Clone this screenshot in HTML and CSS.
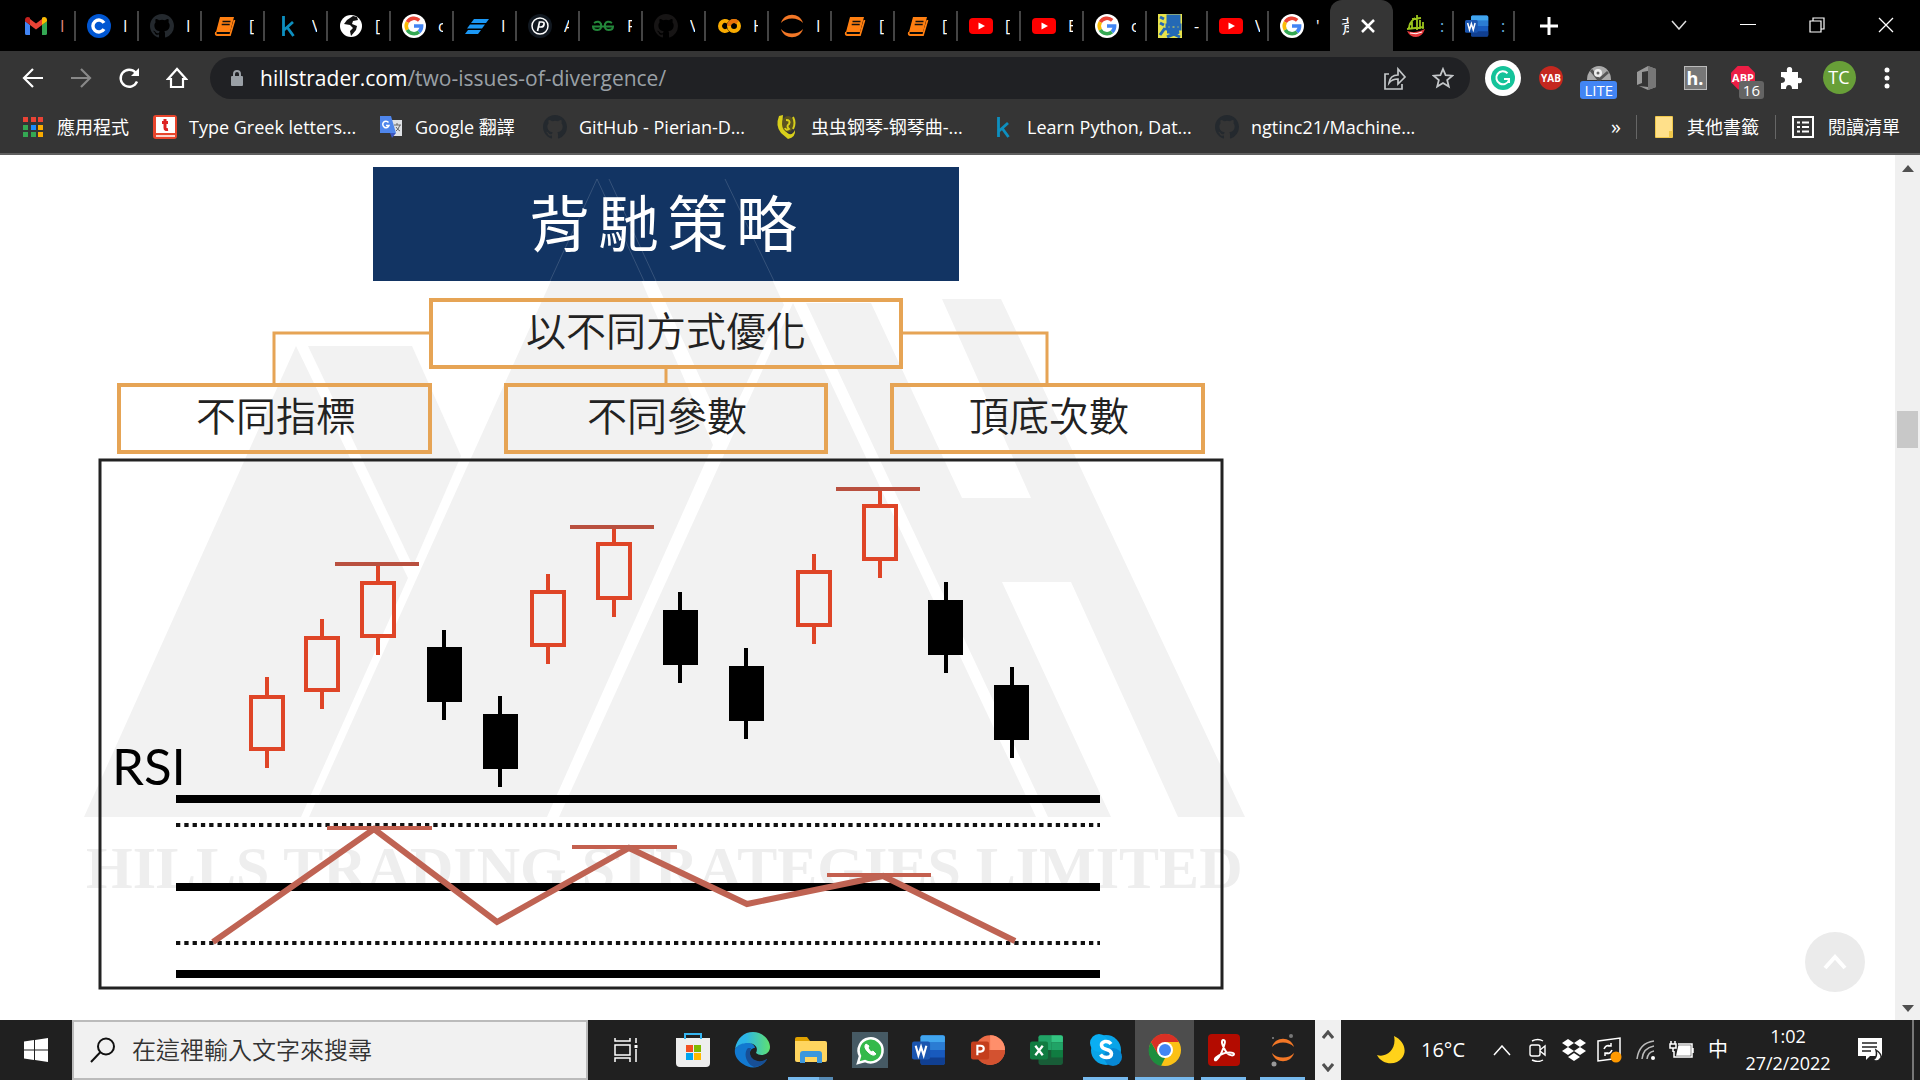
FILE: index.html
```html
<!DOCTYPE html>
<html lang="zh-Hant">
<head>
<meta charset="utf-8">
<meta name="viewport" content="width=device-width, initial-scale=1">
<title>背馳策略</title>
<link rel="stylesheet" href="styles.css">
</head>
<body>
<svg class="defs" aria-hidden="true">
  <symbol id="gmail" viewBox="0 0 24 24"><path fill="#4285f4" d="M1 5.500V19.500Q1 21 2.500 21H6V11L1 7z"/><path fill="#34a853" d="M18 21h3.500q1.500 0 1.500-1.500V7l-5 4z"/><path fill="#ea4335" d="M6 5l6 4.500L18 5v6l-6 4.500L6 11z"/><path fill="#c5221f" d="M1 6c0-3 3-4 5-2.200V11L1 7.300z"/><path fill="#fbbc04" d="M23 6c0-3-3-4-5-2.200V11l5-3.700z"/></symbol>
  <symbol id="coursera" viewBox="0 0 24 24"><circle cx="12" cy="12" r="12" fill="#0056d2"/><path d="M17 8.800a6 6 0 1 0 0 6.400" fill="none" stroke="#fff" stroke-width="3.400"/></symbol>
  <symbol id="github" viewBox="0 0 16 16"><path fill="currentColor" d="M8 0C3.580 0 0 3.580 0 8c0 3.540 2.290 6.530 5.470 7.590.4.070.55-.17.55-.38 0-.19-.01-.82-.01-1.490-2.010.37-2.530-.49-2.690-.94-.09-.23-.48-.94-.82-1.130-.28-.15-.68-.52-.01-.53.630-.01 1.080.58 1.230.82.720 1.210 1.870.87 2.330.66.070-.52.280-.87.510-1.070-1.780-.2-3.640-.89-3.640-3.950 0-.87.310-1.590.82-2.150-.08-.2-.36-1.020.08-2.120 0 0 .67-.21 2.200.82a7.600 7.600 0 0 1 4 0c1.530-1.040 2.200-.82 2.200-.82.440 1.100.16 1.920.08 2.120.51.560.82 1.270.82 2.150 0 3.070-1.870 3.750-3.650 3.950.29.250.54.730.54 1.480 0 1.070-.01 1.930-.01 2.200 0 .21.15.46.55.38A8 8 0 0 0 16 8c0-4.420-3.580-8-8-8z"/></symbol>
  <symbol id="book" viewBox="0 0 24 24"><path fill="#ff7f11" d="M7 3h14l-4 15H3z"/><path d="M3 18q-1 3 1.500 3H17l4.500-15" fill="none" stroke="#ff7f11" stroke-width="1.800"/><path d="M9.500 7.500h8M8.700 10.500h8" stroke="#111" stroke-width="1.500"/><path d="M4 19h13" stroke="#111"/></symbol>
  <symbol id="kaggle" viewBox="0 0 24 24"><path d="M7.500 2v20M17 8l-9 8M11 13l6.500 9" fill="none" stroke="#0d8fbf" stroke-width="2.800"/></symbol>
  <symbol id="globe" viewBox="0 0 24 24"><circle cx="12" cy="12" r="11" fill="#fff"/><path d="M14 2L8 6l-3 4 6 1 3 3-3 3 1 5 5-6 1-4-5-2 1-3 5-1-1-3z" fill="#111"/></symbol>
  <symbol id="google" viewBox="0 0 24 24"><circle cx="12" cy="12" r="12" fill="#fff"/><g fill="none" stroke-width="3.600"><path stroke="#ea4335" d="M5.300 8.200A7.700 7.700 0 0 1 17.200 6.300"/><path stroke="#fbbc04" d="M5.300 8.200a7.700 7.700 0 0 0 0 7.600"/><path stroke="#34a853" d="M5.300 15.800a7.700 7.700 0 0 0 11.700 2"/><path stroke="#4285f4" d="M12 12h7.600a7.500 7.500 0 0 1-2.600 5.800"/></g></symbol>
  <symbol id="stripes" viewBox="0 0 24 24"><path fill="#1b98f5" d="M9 5h15l-3 4H6zM5 10.500h15l-3 4H2zM3 16h13l-3 4H0z"/></symbol>
  <symbol id="pierian" viewBox="0 0 24 24"><circle cx="12" cy="12" r="12" fill="#111820"/><circle cx="12" cy="12" r="8" fill="none" stroke="#fff" stroke-width="1.500"/><path d="M9.500 17l2-9h2.500q2.500 0 2 2.500-.5 2.500-3 2.500h-2" fill="none" stroke="#fff" stroke-width="1.700"/></symbol>
  <symbol id="gfg" viewBox="0 0 24 24"><path d="M3 9q5-3 7 1 1 6-3.500 6T2 12.500h20Q22 16 17.500 16T14 10q2-4 7-1" fill="none" stroke="#23873a" stroke-width="2"/></symbol>
  <symbol id="colab" viewBox="0 0 24 24"><path d="M11 8a5 5 0 1 0 0 8" fill="none" stroke="#f9ab00" stroke-width="4"/><circle cx="17" cy="12" r="5" fill="none" stroke="#f9ab00" stroke-width="4"/><path d="M12 12a5 5 0 0 1 8.500-3.500" fill="none" stroke="#e8710a" stroke-width="4"/></symbol>
  <symbol id="jupyter" viewBox="0 0 24 24"><path fill="#f37726" d="M1 9C4-2 20-2 23 9 18 3 6 3 1 9zM1 15c3 11 19 11 22 0-5 6-17 6-22 0z"/></symbol>
  <symbol id="youtube" viewBox="0 0 24 24"><rect y="4" width="24" height="16" rx="4" fill="red"/><path d="M9.500 8.500v7l6.500-3.500z" fill="#fff"/></symbol>
  <symbol id="manga" viewBox="0 0 24 24"><path fill="#e8e34a" d="M0 0h24v24H0z"/><path d="M2 3l4 2M2 9l4 2M2 21l5-7M10 2h11v6H10zM10 5h11M9 11h13v4H9zM13 11v4M18 11v4M9 18h12L9 23M11 18l11 5" fill="none" stroke="#2469b5" stroke-width="3"/></symbol>
  <symbol id="boat" viewBox="0 0 24 24"><path d="M13 1v15M11 4Q5 9 5 14M8 8v7M16 6v9M19 8v7M3 15l17-2M8 5l9-1" fill="none" stroke="#9bc31c" stroke-width="1.800"/><path d="M3 17q9 3 18-2-3 8-9 8t-9-6z" fill="#e83b3e"/><path d="M6 19q6 2 12-1" stroke="#fff" fill="none"/></symbol>
  <symbol id="word" viewBox="0 0 32 32"><rect x="8" y="2" width="23" height="28" rx="2" fill="#185abd"/><path fill="#41a5ee" d="M8 9V4q0-2 2-2h19q2 0 2 2v5z"/><path fill="#2b7cd3" d="M8 9h23v7H8z"/><path fill="#103f91" d="M8 23h23v5q0 2-2 2H10q-2 0-2-2z"/><rect y="8" width="17" height="17" rx="2" fill="#1a55b0"/><path d="M3.500 12l2.500 9 2.500-8 2.500 8 2.500-9" fill="none" stroke="#fff" stroke-width="2"/></symbol>
  <symbol id="ppt" viewBox="0 0 32 32"><circle cx="18" cy="16" r="14" fill="#ed6c47"/><path fill="#ff8f6b" d="M18 2a14 14 0 0 1 14 14H18z"/><path fill="#d35230" d="M4 16h28a14 14 0 0 1-28 0z"/><rect y="8" width="17" height="17" rx="2" fill="#c43e1c"/><path d="M6 21v-9h3q3 0 3 2.700T9 17.500H6" fill="none" stroke="#fff" stroke-width="2"/></symbol>
  <symbol id="excel" viewBox="0 0 32 32"><rect x="8" y="2" width="23" height="28" rx="2" fill="#185c37"/><path fill="#21a366" d="M8 16V4q0-2 2-2h10v14z"/><path fill="#33c481" d="M20 2h9q2 0 2 2v5H20z"/><path fill="#107c41" d="M20 16h11v7H20z"/><path fill="#21a366" d="M20 9h11v7H20z"/><rect y="8" width="17" height="17" rx="2" fill="#107c41"/><path d="M5 12l7 9M12 12l-7 9" stroke="#fff" stroke-width="2.200"/></symbol>
</svg>

<header class="browser">
  <div class="tab-strip">
    <nav class="tabs" aria-label="Tabs">
      <a class="tab" href="#"><svg class="fav"><use href="#gmail"/></svg><span class="tab-title red">I</span></a>
      <a class="tab" href="#"><svg class="fav"><use href="#coursera"/></svg><span class="tab-title">I</span></a>
      <a class="tab" href="#"><svg class="fav dim"><use href="#github"/></svg><span class="tab-title">I</span></a>
      <a class="tab" href="#"><svg class="fav"><use href="#book"/></svg><span class="tab-title">[</span></a>
      <a class="tab" href="#"><svg class="fav"><use href="#kaggle"/></svg><span class="tab-title">V</span></a>
      <a class="tab" href="#"><svg class="fav"><use href="#globe"/></svg><span class="tab-title">[</span></a>
      <a class="tab" href="#"><svg class="fav"><use href="#google"/></svg><span class="tab-title">c</span></a>
      <a class="tab" href="#"><svg class="fav"><use href="#stripes"/></svg><span class="tab-title">I</span></a>
      <a class="tab" href="#"><svg class="fav"><use href="#pierian"/></svg><span class="tab-title">A</span></a>
      <a class="tab" href="#"><svg class="fav"><use href="#gfg"/></svg><span class="tab-title">F</span></a>
      <a class="tab" href="#"><svg class="fav faint"><use href="#github"/></svg><span class="tab-title">V</span></a>
      <a class="tab" href="#"><svg class="fav"><use href="#colab"/></svg><span class="tab-title">H</span></a>
      <a class="tab" href="#"><svg class="fav"><use href="#jupyter"/></svg><span class="tab-title">I</span></a>
      <a class="tab" href="#"><svg class="fav"><use href="#book"/></svg><span class="tab-title">[</span></a>
      <a class="tab" href="#"><svg class="fav"><use href="#book"/></svg><span class="tab-title">[</span></a>
      <a class="tab" href="#"><svg class="fav"><use href="#youtube"/></svg><span class="tab-title">[</span></a>
      <a class="tab" href="#"><svg class="fav"><use href="#youtube"/></svg><span class="tab-title">E</span></a>
      <a class="tab" href="#"><svg class="fav"><use href="#google"/></svg><span class="tab-title">c</span></a>
      <a class="tab narrow" href="#"><svg class="fav"><use href="#manga"/></svg><span class="tab-title">-</span></a>
      <a class="tab narrow" href="#"><svg class="fav"><use href="#youtube"/></svg><span class="tab-title">V</span></a>
      <a class="tab narrow last" href="#"><svg class="fav"><use href="#google"/></svg><span class="tab-title">'</span></a>
      <div class="tab active"><span class="active-title">背</span><button class="tab-close" aria-label="Close tab"><svg width="14" height="14"><path d="M1 1l12 12M13 1L1 13" stroke="#fff" stroke-width="2.500"/></svg></button></div>
      <a class="tab narrow" href="#"><svg class="fav"><use href="#boat"/></svg><span class="tab-title blue">:</span></a>
      <a class="tab narrow" href="#"><svg class="fav"><use href="#word"/></svg><span class="tab-title blue">:</span></a>
      <button class="new-tab" aria-label="New tab"><svg width="20" height="20"><path d="M10 1v18M1 10h18" stroke="#fff" stroke-width="3"/></svg></button>
    </nav>
    <div class="window-controls">
      <button aria-label="Search tabs"><svg width="16" height="10"><path d="M1 1l7 8 7-8" fill="none" stroke="#ddd" stroke-width="1.500"/></svg></button>
      <button aria-label="Minimize"><svg width="16" height="10"><path d="M0 4.500h16" stroke="#fff"/></svg></button>
      <button aria-label="Restore"><svg width="16" height="16"><path d="M1 4h11v11H1zM4 4V1h11v11h-3" fill="none" stroke="#fff" stroke-width="1.200"/></svg></button>
      <button aria-label="Close"><svg width="16" height="16"><path d="M1 1l14 14M15 1L1 15" stroke="#fff" stroke-width="1.300"/></svg></button>
    </div>
  </div>

  <div class="toolbar">
    <button class="tool" aria-label="Back"><svg width="22" height="22" fill="none" stroke="#fff" stroke-width="2.200"><path d="M21 11H2M11 2l-9 9 9 9"/></svg></button>
    <button class="tool" aria-label="Forward"><svg width="22" height="22" fill="none" stroke="#888" stroke-width="2.200"><path d="M1 11h19M11 2l9 9-9 9"/></svg></button>
    <button class="tool" aria-label="Reload"><svg width="22" height="22" fill="none" stroke="#fff" stroke-width="2.400"><path d="M19 14.500A8.500 8.500 0 1 1 17.500 5.500"/><path d="M21 1v8h-8z" fill="#fff" stroke="none"/></svg></button>
    <button class="tool" aria-label="Home"><svg width="22" height="22" fill="none" stroke="#fff" stroke-width="2.200"><path d="M2 12l9-10 9 10h-3v8H5v-8z"/></svg></button>
    <div class="omnibox">
      <svg width="14" height="18" viewBox="0 0 14 18"><rect x="1" y="7" width="12" height="10" rx="1" fill="#9aa0a6"/><path d="M4 8V5q0-3 3-3t3 3v3" fill="none" stroke="#9aa0a6" stroke-width="2"/></svg>
      <a class="url" href="#">hillstrader.com<span>/two-issues-of-divergence/</span></a>
      <button class="tool" aria-label="Share"><svg width="24" height="26" fill="none" stroke="#c4c7c9" stroke-width="1.700"><path d="M6 9H2v15h17v-5"/><path d="M6 18q1-8 9-8V4l7 8-7 7v-5q-6 0-9 4z"/></svg></button>
      <button class="tool" aria-label="Bookmark"><svg width="22" height="22" viewBox="0 0 22 22"><path d="M11 2l2.600 6.200 6.700.5-5.100 4.400 1.600 6.500L11 16.100l-5.800 3.500 1.600-6.500-5.100-4.400 6.700-.5z" fill="none" stroke="#c4c7c9" stroke-width="1.800"/></svg></button>
    </div>
    <div class="extensions">
      <button class="tool" aria-label="Grammar"><svg width="36" height="36"><circle cx="18" cy="18" r="18" fill="#fff"/><circle cx="18" cy="18" r="12" fill="#15c39a"/><path d="M22.500 13.200A6.500 6.500 0 1 0 24 20M19 19h5v4" fill="none" stroke="#fff" stroke-width="2"/></svg></button>
      <button class="tool"><span class="yab">YAB</span></button>
      <button class="tool lite" aria-label="Lite"><svg width="24" height="24"><path d="M0 14A12 14 0 0 1 24 14z" fill="#aaa"/><path d="M12 14L4 4M12 14l9-8" stroke="#555" stroke-width="3"/><circle cx="11" cy="7" r="4" fill="#eee"/><circle cx="11" cy="7" r="1.500" fill="#666"/></svg><span class="badge badge-blue">LITE</span></button>
      <button class="tool" aria-label="Office"><svg width="24" height="24"><path d="M2 6l11-6 8 3v18l-8 3L4 20l9 1V5L7 6v11l-5 2z" fill="#999"/><path d="M13 0l8 3v18l-8 3z" fill="#777"/></svg></button>
      <button class="tool"><span class="hyp">h.</span></button>
      <button class="tool lite"><span class="abp">ABP</span><span class="badge badge-gray">16</span></button>
      <button class="tool" aria-label="Extensions"><svg width="22" height="22"><path fill="#fff" d="M1 5h6q-1-5 2.500-5T12 5h6v6q4-1 4 2.500T18 16v6h-6q0-4-3-4t-3 4H1v-6q4 0 4-3t-4-3z"/></svg></button>
      <button class="tool"><span class="avatar">TC</span></button>
      <button class="tool" aria-label="Menu"><svg width="6" height="22" fill="#fff"><circle cx="3" cy="3" r="2.500"/><circle cx="3" cy="11" r="2.500"/><circle cx="3" cy="19" r="2.500"/></svg></button>
    </div>
  </div>

  <nav class="bookmarks" aria-label="Bookmarks">
    <a href="#"><svg class="fav" viewBox="0 0 24 24"><path fill="#ea4335" d="M2 2h5v5H2zM10 2h5v5h-5zM17 2h5v5h-5z"/><path fill="#34a853" d="M2 10h5v5H2zM2 17h5v5H2z"/><path fill="#1a8cff" d="M10 10h5v5h-5z"/><path fill="#34a853" d="M10 17h5v5h-5z"/><path fill="#f9ab00" d="M17 10h5v5h-5zM17 17h5v5h-5z"/></svg>應用程式</a>
    <a href="#"><svg class="fav" viewBox="0 0 24 24"><rect width="24" height="24" rx="3" fill="#e8452c"/><path fill="#fff" d="M3 2h19v16H3z"/><path fill="#fbd5cf" d="M3 20h19v2H3z"/><path d="M12 4v9q0 2 3 1.500M9 7.500h6" fill="none" stroke="#d22" stroke-width="3"/></svg>Type Greek letters...</a>
    <a href="#"><svg class="fav" viewBox="0 0 24 24"><path fill="#dfe1e5" d="M11 5h12v16H14z"/><path fill="#4f86ec" d="M1 1h11l5 17H1z"/><path fill="#3b55c0" d="M11 18h6l-4 5z"/><path d="M9.500 7.500A3.200 3.200 0 1 0 10 10.500H7" fill="none" stroke="#fff" stroke-width="1.500"/><path d="M15 10h7M18 8v2M21 10q-2 5-4 6M17 12q2 3 4 4" fill="none" stroke="#666"/></svg>Google 翻譯</a>
    <a href="#"><svg class="fav dim"><use href="#github"/></svg>GitHub - Pierian-D...</a>
    <a href="#"><svg class="fav" viewBox="0 0 24 24"><path fill="#d8cf1b" d="M4 1q-4 10 2 17l7 6q8-2 7-9-2 5-6 4Q6 15 8 0z"/><ellipse cx="13" cy="9" rx="6" ry="8" fill="#5a5220"/><path d="M11 5q5 0 3 4-3 2 0 5-3 2-4-1M18 2q3 6 0 12" fill="none" stroke="#d8cf1b" stroke-width="2"/></svg>虫虫钢琴-钢琴曲-...</a>
    <a href="#"><svg class="fav"><use href="#kaggle"/></svg>Learn Python, Dat...</a>
    <a href="#"><svg class="fav dim"><use href="#github"/></svg>ngtinc21/Machine...</a>
    <div class="bookmarks-end">
      <button class="more" aria-label="More bookmarks">»</button>
      <a class="divided" href="#"><svg width="18" height="22"><rect width="18" height="22" rx="1" fill="#f0c84b"/><path d="M1 1h16v14h-3v6H1z" fill="#ffe08a"/></svg>其他書籤</a>
      <a class="divided" href="#"><svg width="22" height="22"><path d="M1 1h20v20H1z" fill="none" stroke="#fff" stroke-width="2"/><path d="M5 6.500h3M5 11h3M5 15.500h3M10 6.500h7M10 11h7M10 15.500h7" stroke="#fff" stroke-width="2"/></svg>閱讀清單</a>
    </div>
  </nav>
</header>

<main class="page">
  <svg class="figure" viewBox="0 155 1320 865" role="img" aria-label="背馳策略">
    <g fill="#f2f2f2">
      <path d="M296 346L84 817H301L408 578z"/>
      <path d="M308 346H412L461 456 413 566z"/>
      <path d="M597 179L309 817H547L713 445z"/>
      <path d="M609 179H725L784 305 724 430z"/>
      <path d="M793 303L559 817H1036z"/>
      <path d="M806 303H871L962 498H1031L942 299H1001L1245 817H1178L1071 582H1002L1111 817H1048z"/>
    </g>
    <text class="watermark" x="86" y="888">HILLS TRADING STRATEGIES LIMITED</text>

    <rect x="373" y="167" width="586" height="114" fill="#123463"/>
    <path d="M550 281L597 179 644 281M609 179L656 281M725 179L774 281" fill="none" stroke="#fff" opacity=".15"/>
    <text class="headline" x="529 598 667 736" y="247">背馳策略</text>

    <g fill="none" stroke="#e6a455" stroke-width="4">
      <rect x="431" y="300" width="470" height="67"/>
      <rect x="119" y="385" width="311" height="67"/>
      <rect x="506" y="385" width="320" height="67"/>
      <rect x="892" y="385" width="311" height="67"/>
      <path d="M429 333H274V384M903 333H1047V384M666 368V384" stroke-width="3"/>
    </g>
    <g class="box-label">
      <text x="666" y="346">以不同方式優化</text>
      <text x="276" y="431">不同指標</text>
      <text x="667" y="431">不同參數</text>
      <text x="1049" y="431">頂底次數</text>
    </g>

    <rect x="100" y="460" width="1122" height="528" fill="none" stroke="#222" stroke-width="3"/>
    <text class="rsi" x="112" y="785">RSI</text>

    <g fill="none" stroke="#df4527" stroke-width="4">
      <path d="M251 697h32v52h-32zM267 677v20M267 749v19"/>
      <path d="M306 638h32v52h-32zM322 619v19M322 690v19"/>
      <path d="M362 583h32v53h-32zM378 564v19M378 636v19"/>
      <path d="M532 592h32v53h-32zM548 574v18M548 645v19"/>
      <path d="M598 544h32v54h-32zM614 527v17M614 598v19"/>
      <path d="M798 572h32v53h-32zM814 554v18M814 625v19"/>
      <path d="M864 506h32v53h-32zM880 489v17M880 559v19"/>
    </g>
    <path d="M335 564h84M570 527h84M836 489h84" stroke="#b9503f" stroke-width="4"/>
    <g stroke="#000" stroke-width="4">
      <path d="M429 649h31v51h-31zM444 630v90"/>
      <path d="M485 716h31v51h-31zM500 696v91"/>
      <path d="M665 612h31v51h-31zM680 592v91"/>
      <path d="M731 668h31v51h-31zM746 648v91"/>
      <path d="M930 602h31v51h-31zM946 582v91"/>
      <path d="M996 687h31v51h-31zM1012 667v91"/>
    </g>
    <path d="M176 799h924M176 887h924M176 974h924" stroke="#000" stroke-width="8"/>
    <path d="M176 825h924M176 943h924" stroke="#111" stroke-width="4" stroke-dasharray="4.300 4"/>
    <path d="M327 828h105M572 847h105M827 875h104" stroke="#c4604f" stroke-width="4"/>
    <path d="M213 942L374 829 497 922 629 848 747 904 883 876 1015 941" fill="none" stroke="#bf6353" stroke-width="6"/>
  </svg>
  <button class="to-top" aria-label="Back to top"><svg width="24" height="16"><path d="M2 14L12 3l10 11" fill="none" stroke="#fff" stroke-width="4"/></svg></button>
  <div class="scrollbar">
    <svg width="12" height="7"><path d="M0 7l6-7 6 7z" fill="#505050"/></svg>
    <span class="above"></span><span class="thumb"></span><span class="below"></span>
    <svg width="12" height="7"><path d="M0 0h12L6 7z" fill="#505050"/></svg>
  </div>
</main>

<footer class="taskbar">
  <button class="start" aria-label="Start"><svg width="24" height="24" fill="#fff"><path d="M0 3.500l10-1.400V11.500H0zM11 2l13-2v11.500H11zM0 12.500h10v9.400L0 20.500zM11 12.500h13V24l-13-2z"/></svg></button>
  <label class="search"><svg width="26" height="26" fill="none" stroke="#111" stroke-width="2"><circle cx="16" cy="9.500" r="8"/><path d="M10.500 15L1 25"/></svg><input type="text" placeholder="在這裡輸入文字來搜尋" aria-label="搜尋"></label>
  <button class="app task-view" aria-label="Task view"><svg width="24" height="24" fill="none" stroke="#fff" stroke-width="1.500"><path d="M1 0v3h15V0M1 7h15v10H1zM1 24v-4h15v4M22 0v5M22 11v13"/><path d="M20.500 7h3v3h-3z" fill="#fff" stroke="none"/></svg></button>
  <div class="apps">
    <button class="app" aria-label="Store"><svg width="36" height="36"><path d="M1 6h34v25q0 4-4 4H5q-4 0-4-4z" fill="#eee"/><path d="M10 7V2h16v5" fill="none" stroke="#35b5f1" stroke-width="2"/><path fill="#f25022" d="M11 13h7v7h-7z"/><path fill="#7fba00" d="M19 13h7v7h-7z"/><path fill="#00a4ef" d="M11 21h7v7h-7z"/><path fill="#ffb900" d="M19 21h7v7h-7z"/></svg></button>
    <button class="app" aria-label="Edge"><svg width="36" height="36"><defs><linearGradient id="eg"><stop offset=".3" stop-color="#2cb5e8"/><stop offset="1" stop-color="#5fe070"/></linearGradient></defs><path fill="#1279d0" d="M1 17C7 8 20 9 21 16c-5 0-7 6-3 11 4 4 10 4 15 0-5 9-16 11-24 5C3 28 0 23 1 17z"/><path fill="#174f96" d="M14 16c-5 5-2 16 6 19 6 0 11-4 13-8-5 3-11 3-15-1-3-4-2-7-1-10z"/><path fill="url(#eg)" d="M1 17C3 6 10 0 19 0c10 0 17 8 17 15 0 8-10 10-14 6 3-6-2-10-8-10S4 13 1 17z"/></svg></button>
    <button class="app open grouped" aria-label="Explorer"><svg width="32" height="30"><path fill="#e0a100" d="M0 4q0-2 2-2h10l3 4v4H0z"/><path fill="#ffd55f" d="M0 6h30q2 0 2 2v17q0 2-2 2H2q-2 0-2-2z"/><path fill="#3b97dd" d="M5 28V19q0-3 3-3h16q3 0 3 3v9h-5v-6H10v6z"/></svg></button>
    <button class="app" aria-label="WhatsApp"><svg width="36" height="36"><path fill="#465a64" d="M0 0h36v36H0z"/><path fill="#34b94b" stroke="#fff" stroke-width="2.500" d="M6 31l2-7A12 12 0 1 1 13 29z"/><path d="M14 12q-3 3 2 8t8 2l-3-3-2 1-3-4 1-2z" fill="#fff" stroke="#fff"/></svg></button>
    <button class="app" aria-label="Word"><svg width="36" height="34"><use href="#word"/></svg></button>
    <button class="app" aria-label="PowerPoint"><svg width="36" height="34"><use href="#ppt"/></svg></button>
    <button class="app" aria-label="Excel"><svg width="36" height="34"><use href="#excel"/></svg></button>
    <button class="app open" aria-label="Skype"><svg width="34" height="34"><circle cx="17" cy="17" r="15" fill="#09a4e8"/><circle cx="10" cy="10" r="9" fill="#0aaef2"/><circle cx="24" cy="24" r="9" fill="#0788d4"/><path d="M22 11q-2-3-6-2.500-4 1-3.500 4t5 4 5 4q0 4-5 4-4 0-6-3" fill="none" stroke="#fff" stroke-width="3.500"/></svg></button>
    <button class="app open current" aria-label="Chrome"><svg width="34" height="34"><circle cx="17" cy="17" r="16" fill="#fbc116"/><path fill="#1e8e3e" d="M3 9l7 12 7 4-4 8A16 16 0 0 1 3 9z"/><path fill="#d93025" d="M3 9a16 16 0 0 1 28 0H17L10 21z"/><circle cx="17" cy="17" r="8" fill="#fff"/><circle cx="17" cy="17" r="6" fill="#4285f4"/></svg></button>
    <button class="app open" aria-label="Acrobat"><svg width="32" height="32"><rect width="32" height="32" rx="4" fill="#b30b00"/><path d="M15 6c-3 1 1 9 4 13 3 3 7 3 7 1s-8-2-12 0-8 4-7 6 6-5 8-11 3-9 0-9z" fill="none" stroke="#fff" stroke-width="2"/></svg></button>
    <button class="app open" aria-label="Jupyter"><svg width="32" height="34"><svg x="4" y="4" width="24" height="26"><use href="#jupyter"/></svg><circle cx="24" cy="3" r="2" fill="#777"/><circle cx="6" cy="5" r="1" fill="#888"/><circle cx="7" cy="31" r="2.500" fill="#999"/></svg></button>
  </div>
  <div class="app-scroll"><button aria-label="Scroll up"><svg width="12" height="9"><path d="M1 8l5-6 5 6" fill="none" stroke="#505050" stroke-width="3"/></svg></button><button aria-label="Scroll down"><svg width="12" height="9"><path d="M1 1l5 6 5-6" fill="none" stroke="#505050" stroke-width="3"/></svg></button></div>
  <div class="weather"><svg width="28" height="28"><path fill="#ffd21a" d="M17 0c9 4 14 14 8 22S5 29 0 19c9 3 20-5 17-19z"/></svg><span>16°C</span></div>
  <div class="tray">
    <button aria-label="Hidden icons"><svg width="18" height="11"><path d="M1 10l8-9 8 9" fill="none" stroke="#fff" stroke-width="1.500"/></svg></button>
    <button aria-label="Camera"><svg width="20" height="24" fill="none" stroke="#fff" stroke-width="1.400"><rect x="2" y="7" width="10" height="11" rx="2"/><path d="M12 12l5-4v9l-5-4M4 3q6-3 11 0M4 22q6 3 11 0"/></svg></button>
    <button aria-label="Dropbox"><svg width="24" height="22" fill="#fff"><path d="M6 0l6 4-6 4-6-4zM18 0l6 4-6 4-6-4zM6 8l6 4-6 4-6-4zM18 8l6 4-6 4-6-4zM12 14l6 4-6 4-6-4z"/></svg></button>
    <button aria-label="Sync"><svg width="26" height="26" fill="none" stroke="#fff" stroke-width="1.500"><path d="M1 4l22-3v20L1 24zM7 12q2-5 7-3M14 6v3h-3M15 13q-2 5-7 3M8 19v-3h3"/><circle cx="19" cy="20" r="5.500" fill="#f90" stroke="none"/></svg></button>
    <button aria-label="Wi-Fi"><svg width="20" height="22" fill="none" stroke="#bbb" stroke-width="1.500"><path d="M1 20Q3 4 18 2M6 20Q7 9 18 7M11 20q1-7 7-8"/><circle cx="17" cy="19" r="2" fill="#fff" stroke="none"/></svg></button>
    <button aria-label="Battery"><svg width="26" height="20" fill="none" stroke="#fff" stroke-width="1.500"><path d="M9 4h14v13H5v-6M24 8v5M1 4h6v4H1zM2 1v3M6 1v3M4 8v4"/><path d="M10 6h11v9H8z" fill="#fff"/></svg></button>
    <button class="ime">中</button>
  </div>
  <div class="clock"><time>1:02</time><time>27/2/2022</time></div>
  <button class="notify" aria-label="Notifications"><svg width="26" height="26"><path fill="#fff" d="M1 1h24v18H13l-4 4v-4H1z"/><path d="M5 6h15M5 10h15M5 14h9" stroke="#222" stroke-width="1.500"/><path d="M19 13q6 4 5 8-3 5-9 2 6-2 4-10z" fill="#fff" stroke="#222" stroke-width="1.500"/></svg></button>
  <button class="show-desktop" aria-label="Show desktop"></button>
</footer>
</body>
</html>
```
FILE: styles.css
```css
* { box-sizing: border-box; }
body {
  margin: 0;
  height: 100vh;
  display: flex;
  flex-direction: column;
  background: #fff;
  color: #fff;
  font: 18px/24px "Open Sans", "Noto Sans CJK TC", sans-serif;
}
button { font: inherit; color: inherit; background: none; border: 0; padding: 0; display: flex; align-items: center; justify-content: center; }
a { color: inherit; text-decoration: none; }
svg { display: block; flex: none; }
.defs { width: 0; height: 0; position: absolute; }
.fav { width: 24px; height: 24px; flex: none; }
.dim { color: #24292e; }
.faint { color: #171515; }

.browser { flex: none; background: #353535; border-bottom: 2px solid #5f5f5f; }
.tab-strip { display: flex; justify-content: space-between; height: 51px; background: #000; }
.tabs { display: flex; align-items: center; padding-left: 13px; }
.tab { width: 63px; height: 30px; display: flex; align-items: center; gap: 12px; padding-left: 11px; border-right: 2px solid #444; }
.narrow { width: 61px; }
.last { border-color: transparent; }
.tab-title { width: 5px; overflow: hidden; white-space: nowrap; font-size: 16px; }
.red { color: #e08a7a; }
.blue { color: #6cb8e8; }
.active { height: 51px; background: #353535; border: 0; border-radius: 12px 12px 0 0; }
.active-title { width: 8px; overflow: hidden; white-space: nowrap; }
.new-tab { width: 64px; margin-left: 2px; }
.window-controls { display: flex; height: 50px; }
.window-controls button { width: 69px; }

.toolbar { display: flex; align-items: center; height: 53px; padding: 0 9px; }
.tool { width: 48px; height: 42px; flex: none; }
.omnibox { flex: 1; display: flex; align-items: center; height: 42px; margin-left: 9px; padding: 0 3px 0 20px; border-radius: 21px; background: #202124; }
.url { flex: 1; margin-left: 16px; font-size: 21px; }
.url span { color: #9aa0a6; }
.extensions { display: flex; padding-left: 9px; }
.yab { width: 24px; line-height: 24px; border-radius: 12px; background: #c5281f; font-size: 10px; font-weight: 700; }
.lite { position: relative; }
.badge { position: absolute; bottom: 0; border-radius: 3px; padding: 0 4px; font-size: 15px; line-height: 18px; }
.badge-blue { background: #4285f4; right: 6px; }
.badge-gray { background: #646464; right: 3px; }
.hyp { width: 23px; line-height: 22px; border: 1px solid #bbb; background: #777; font-weight: 700; }
.abp { width: 24px; line-height: 24px; background: #ed1e45; font-size: 11px; font-weight: 700; clip-path: polygon(30% 0, 70% 0, 100% 30%, 100% 70%, 70% 100%, 30% 100%, 0 70%, 0 30%); }
.avatar { width: 33px; line-height: 33px; border-radius: 17px; background: #689f38; }

.bookmarks { display: grid; grid-template-columns: 132px 226px 164px 232px 216px 224px auto 1fr; height: 49px; padding: 0 20px 4px 21px; }
.bookmarks a { display: flex; align-items: center; gap: 12px; white-space: nowrap; }
.bookmarks-end { display: flex; align-items: center; justify-content: flex-end; }
.more { width: 24px; margin-right: 8px; font-size: 20px; }
.bookmarks .divided { height: 24px; gap: 14px; padding-left: 18px; border-left: 1px solid #666; }
.bookmarks .divided + .divided { margin-left: 16px; padding-left: 16px; }

.page { flex: 1; min-height: 0; display: flex; justify-content: space-between; position: relative; overflow: hidden; }
.figure { width: 1320px; max-width: 90%; height: auto; align-self: flex-start; font-family: "Noto Sans CJK TC", sans-serif; }
.watermark { font: 700 60px "Liberation Serif", serif; fill: #eee; }
.headline { font-size: 61px; fill: #fff; }
.box-label { font-size: 40px; fill: #222; text-anchor: middle; font-weight: 350; }
.rsi { font: 51px Lato, sans-serif; fill: #000; }
.to-top { position: absolute; right: 55px; bottom: 28px; width: 60px; height: 60px; border-radius: 50%; background: #ebebeb; }
.scrollbar { width: 25px; background: #f0f0f0; display: flex; flex-direction: column; align-items: center; padding: 10px 0 8px; }
.above { flex: 3; }
.below { flex: 7; }
.thumb { width: 21px; height: 37px; background: #c8c8c8; }

.taskbar { flex: none; display: flex; height: 60px; background: #202020; }
.start { width: 72px; }
.search { display: flex; align-items: center; gap: 16px; flex: 0 1 516px; padding-left: 16px; border: 2px solid #bbb; background: #f1f1f1; }
.search input { flex: 1; min-width: 0; border: 0; background: none; outline: 0; font: 350 24px "Noto Sans CJK TC", sans-serif; color: #222; padding: 0 0 4px; }
.search input::placeholder { color: #333; opacity: 1; }
.apps { display: flex; }
.app { width: 59px; height: 60px; }
.task-view { width: 75px; }
.open { background: linear-gradient(#76b9ed, #76b9ed) center bottom / 45px 3px no-repeat; }
.current { background: #4d4d4d linear-gradient(#76b9ed, #76b9ed) center bottom / 100% 3px no-repeat; }
.grouped { background-image: linear-gradient(90deg, #76b9ed 70%, #568ab4 70%); }
.app-scroll { display: flex; flex-direction: column; justify-content: space-between; width: 26px; margin-left: 3px; padding: 10px 0 8px; background: #f0f0f0; }
.app-scroll button { width: 26px; }
.weather { display: flex; align-items: center; gap: 16px; margin-left: 36px; font-size: 20px; }
.tray { display: flex; margin-left: auto; }
.tray button { width: 36px; }
.ime { font-size: 20px; }
.clock { width: 104px; display: flex; flex-direction: column; justify-content: center; align-items: center; line-height: 27px; }
.notify { width: 64px; margin-left: -2px; }
.show-desktop { width: 8px; margin: 0 0 0 10px; border-left: 2px solid #777; }
```
